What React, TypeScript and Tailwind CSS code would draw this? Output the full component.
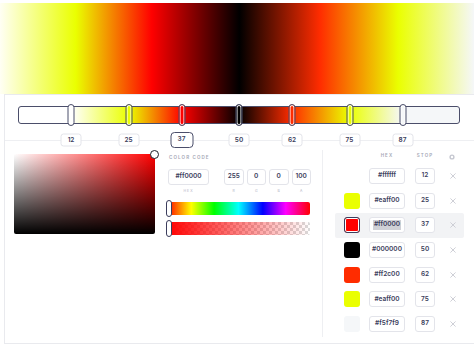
import React, { useState } from 'react';

/**
 * GradientEditor - preview, stop slider, colour picker and stop list.
 */

type Stop = { pos: number; hex: string };

const STOPS: Stop[] = [
  { pos: 12, hex: '#ffffff' },
  { pos: 25, hex: '#eaff00' },
  { pos: 37, hex: '#ff0000' },
  { pos: 50, hex: '#000000' },
  { pos: 62, hex: '#ff2c00' },
  { pos: 75, hex: '#eaff00' },
  { pos: 87, hex: '#f5f7f9' },
];

const Box: React.FC<{ className?: string; children: React.ReactNode }> = ({ className = '', children }) => (
  <div
    className={`flex items-center justify-center h-[16px] rounded-[3px] border border-[#e3e4ea] bg-white text-[6.5px] font-semibold text-[#3b3d5c] ${className}`}
  >
    {children}
  </div>
);

const App: React.FC = () => {
  const [selected, setSelected] = useState(2);

  // bar gradient from the stops
  const barGradient = `linear-gradient(to right, ${STOPS.map((s) => `${s.hex} ${s.pos}%`).join(', ')})`;

  return (
    <div className="w-[474px] h-[348px] bg-white overflow-hidden font-['Inter',sans-serif]">
      {/* Preview */}
      <div className="mt-[3px] h-[91px] bg-[linear-gradient(to_right,#fffff4_0%,#eaff00_16%,#ff0000_32%,#000000_50.5%,#ff2c00_67.5%,#eaff00_84%,#f5f7f9_100%)]" />

      {/* Panel */}
      <div className="ml-[4px] border-l border-t border-b border-[#e9eaee]">
        {/* Stop slider */}
        <div className="pl-[13px] pt-[11px] w-[456px]">
          <div className="relative h-[18px] w-[442px]">
            <div
              className="absolute inset-0 rounded-[3px] border-[1.5px] border-[#4b4e6a]"
              style={{ backgroundImage: barGradient }}
            />
            {STOPS.map((s, i) => (
              <button
                key={s.pos}
                onClick={() => setSelected(i)}
                className="absolute top-[-2px] h-[22px] w-[7px] -translate-x-1/2 rounded-full border-[1.5px] border-[#4b4e6a] shadow-[inset_0_0_0_1px_#ffffff]"
                style={{ left: `${s.pos}%`, backgroundColor: s.hex }}
              />
            ))}
          </div>
        </div>

        {/* Stop labels */}
        <div className="relative h-[16px] mt-[8px]">
          <div className="absolute left-0 right-0 top-[8px] h-px bg-[#eeeff2]" />
          <div className="absolute left-[13px] top-0 h-[16px] w-[442px]">
            {STOPS.map((s, i) => (
              <div
                key={s.pos}
                className={`absolute -translate-x-1/2 -translate-y-1/2 top-1/2 flex items-center justify-center bg-white text-[6.5px] font-semibold text-[#3b3d5c] ${
                  i === selected
                    ? 'w-[23px] h-[16px] rounded-[4px] border-[1.5px] border-[#4b4e6a]'
                    : 'w-[21px] h-[13px] rounded-[3px] border border-[#e3e4ea]'
                }`}
                style={{ left: `${s.pos}%` }}
              >
                {s.pos}
              </div>
            ))}
          </div>
        </div>

        {/* Lower section */}
        <div className="flex h-[195px]">
          <div className="flex w-[317px] pl-[9px] pt-[6px] gap-[12px]">
            {/* Saturation / value square */}
            <div className="relative w-[141px] h-[80px] rounded-[2px] bg-[linear-gradient(to_top,#000000,rgba(0,0,0,0)),linear-gradient(to_right,#ffffff,#ff0000)]">
              <div className="absolute right-[-4px] top-[-4px] w-[9px] h-[9px] rounded-full border-[1.5px] border-[#1f1f2a] bg-white" />
            </div>

            {/* Colour code */}
            <div className="w-[144px] flex flex-col">
              <div className="pl-[2px] mt-[1px] text-[4.5px] leading-[6px] font-semibold tracking-[0.25em] text-[#a3a6b4]">
                COLOR CODE
              </div>
              <div className="flex mt-[8px] pl-[1px]">
                <div className="flex flex-col items-center">
                  <Box className="w-[41px]">#ff0000</Box>
                  <span className="mt-[4px] text-[3.5px] tracking-[0.3em] text-[#b0b2bf]">HEX</span>
                </div>
                <div className="flex gap-[3px] ml-[15px]">
                  {[
                    ['255', 'R'],
                    ['0', 'G'],
                    ['0', 'B'],
                    ['100', 'A'],
                  ].map(([v, l]) => (
                    <div key={l} className="flex flex-col items-center">
                      <Box className="w-[19.5px]">{v}</Box>
                      <span className="mt-[4px] text-[3.5px] text-[#b0b2bf]">{l}</span>
                    </div>
                  ))}
                </div>
              </div>

              {/* Hue */}
              <div className="relative mt-[8px] h-[13px] w-[143px] rounded-[2px] bg-[linear-gradient(to_right,#ff0000_0%,#ffff00_17%,#00ff00_33%,#00ffff_50%,#0000ff_67%,#ff00ff_83%,#ff0000_100%)]">
                <div className="absolute left-[-1px] top-[-2px] h-[17px] w-[6px] rounded-full border-[1.5px] border-[#3b3d5c] bg-white" />
              </div>
              {/* Alpha */}
              <div className="relative mt-[7px] h-[13px] w-[143px] rounded-[2px] [background-image:linear-gradient(to_right,#ff0000,rgba(255,0,0,0)),repeating-conic-gradient(#d9d9d9_0%_25%,#ffffff_0%_50%)] [background-size:100%_100%,6px_6px]">
                <div className="absolute left-[-1px] top-[-2px] h-[17px] w-[6px] rounded-full border-[1.5px] border-[#3b3d5c] bg-white" />
              </div>
            </div>
          </div>

          <div className="w-px bg-[#eeeff2] mt-[2px] mb-[6px]" />

          {/* Stop list */}
          <div className="flex-1 pl-[12px] pr-[10px] pt-[2px]">
            <div className="flex items-center h-[13.65px] pl-[9px] text-[4.5px] font-semibold tracking-[0.25em] text-[#a3a6b4]">
              <div className="w-[16px]" />
              <div className="w-[36px] ml-[9px] text-center">HEX</div>
              <div className="w-[20px] ml-[10px] text-center">STOP</div>
              <div className="ml-[14px] w-[6px] flex justify-center">
                <svg width="6" height="6" viewBox="0 0 6 6">
                  <circle cx="3" cy="3" r="2.6" fill="#c5c7d0" />
                  <circle cx="3" cy="3" r="1.2" fill="#ffffff" />
                </svg>
              </div>
            </div>
            {STOPS.map((s, i) => (
              <div
                key={s.pos}
                onClick={() => setSelected(i)}
                className={`flex items-center h-[24.7px] pl-[9px] rounded-[2px] ${i === selected ? 'bg-[#f2f3f5]' : ''}`}
              >
                <div
                  className={`w-[16px] h-[16px] rounded-[3px] ${
                    i === selected ? 'border-[1.5px] border-[#3b3d5c] shadow-[inset_0_0_0_1px_#ffffff]' : ''
                  }`}
                  style={{ backgroundColor: s.hex }}
                />
                <Box className="w-[36px] ml-[9px]">
                  {i === selected ? <span className="bg-[#cfd0d6] px-[1px]">{s.hex}</span> : s.hex}
                </Box>
                <Box className="w-[20px] ml-[10px]">{s.pos}</Box>
                <div className="ml-[14px] w-[7px] flex justify-center">
                  <svg width="6" height="6" viewBox="0 0 6 6" stroke="#c9cbd3" strokeWidth="0.9" strokeLinecap="round">
                    <line x1="0.7" y1="0.7" x2="5.3" y2="5.3" />
                    <line x1="5.3" y1="0.7" x2="0.7" y2="5.3" />
                  </svg>
                </div>
              </div>
            ))}
          </div>
        </div>
      </div>
    </div>
  );
};

export default App;
